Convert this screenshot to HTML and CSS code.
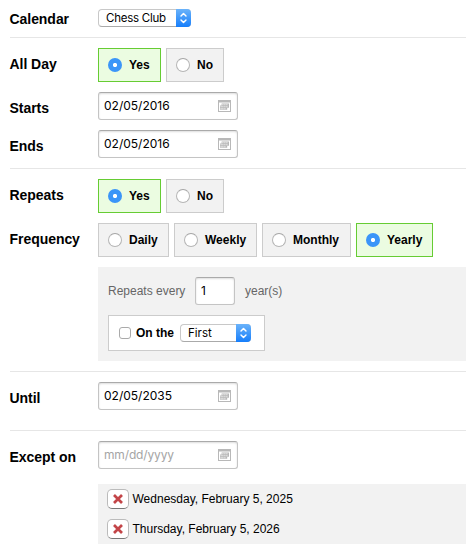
FILE: index.html
```html
<!DOCTYPE html>
<html lang="en">
<head>
<meta charset="utf-8">
<title>Calendar event</title>
<link rel="stylesheet" href="styles.css">
</head>
<body>
<svg class="defs" aria-hidden="true">
  <symbol id="cal" viewBox="0 0 13 12">
    <path fill="#b8b8b8" fill-rule="evenodd" d="M0 0H13V12H0ZM1 2.4V11H12V2.4Z"/>
    <path fill="#b8b8b8" d="M3.6 3.5H11V7.8H9.2V9.8H2V5.4H3.6Z"/>
    <path fill="#fff" d="M4.4 4.2h1v1h-1zM6.4 4.2h1v1h-1zM8.4 4.2h1v1h-1zM2.6 6.2h1v1h-1zM4.4 6.2h1v1h-1zM6.4 6.2h1v1h-1zM8.4 6.2h1v1h-1zM2.6 8.2h1v1h-1zM4.4 8.2h1v1h-1zM6.4 8.2h1v1h-1z"/>
  </symbol>
  <symbol id="arrows" viewBox="0 0 15 18">
    <path fill="none" stroke="#fff" stroke-width="1.4" stroke-linecap="round" stroke-linejoin="round" d="M5 7l2.5-2.6L10 7M5 11l2.5 2.6L10 11"/>
  </symbol>
  <symbol id="cross" viewBox="0 0 10 10">
    <path stroke="#c34548" stroke-width="2.7" d="M1 1l8 8M9 1L1 9"/>
  </symbol>
</svg>
<form class="form">
  <section class="group calendar">
    <div class="row">
      <span class="label">Calendar</span>
      <div class="select chess"><span>Chess Club</span><svg><use href="#arrows"/></svg></div>
    </div>
  </section>
  <section class="group dates">
    <div class="row choice">
      <span class="label">All Day</span>
      <div class="options">
        <div class="option yes on"><i class="radio"></i>Yes</div>
        <div class="option no"><i class="radio"></i>No</div>
      </div>
    </div>
    <div class="row field starts">
      <span class="label">Starts</span>
      <div class="input"><span>02/05/2016</span><svg><use href="#cal"/></svg></div>
    </div>
    <div class="row field">
      <span class="label">Ends</span>
      <div class="input"><span>02/05/2016</span><svg><use href="#cal"/></svg></div>
    </div>
  </section>
  <section class="group repeats">
    <div class="row choice">
      <span class="label">Repeats</span>
      <div class="options">
        <div class="option yes on"><i class="radio"></i>Yes</div>
        <div class="option no"><i class="radio"></i>No</div>
      </div>
    </div>
    <div class="row choice frequency">
      <span class="label">Frequency</span>
      <div class="options">
        <div class="option daily"><i class="radio"></i>Daily</div>
        <div class="option weekly"><i class="radio"></i>Weekly</div>
        <div class="option monthly"><i class="radio"></i>Monthly</div>
        <div class="option yearly on"><i class="radio"></i>Yearly</div>
      </div>
    </div>
    <div class="panel">
      <div class="every"><span class="before">Repeats every</span><div class="input count"><span>1</span></div><span>year(s)</span></div>
      <div class="nth"><i class="checkbox"></i><b>On the</b><div class="select first"><span>First</span><svg><use href="#arrows"/></svg></div></div>
    </div>
  </section>
  <section class="group until">
    <div class="row field">
      <span class="label">Until</span>
      <div class="input"><span>02/05/2035</span><svg><use href="#cal"/></svg></div>
    </div>
  </section>
  <section class="group except">
    <div class="row field">
      <span class="label">Except on</span>
      <div class="input placeholder"><span>mm/dd/yyyy</span><svg><use href="#cal"/></svg></div>
    </div>
    <div class="exceptions">
      <div class="exception"><span class="remove"><svg><use href="#cross"/></svg></span><span>Wednesday, February 5, 2025</span></div>
      <div class="exception"><span class="remove"><svg><use href="#cross"/></svg></span><span>Thursday, February 5, 2026</span></div>
    </div>
  </section>
</form>
</body>
</html>
```
FILE: styles.css
```css
* { box-sizing: border-box; }
body { margin: 0; background: #fff; color: #000; font: 12px/14px "Liberation Sans", Arial, sans-serif; white-space: nowrap; overflow: hidden; }
.defs { display: none; }
svg { display: block; flex: none; }
.form { padding-left: 10px; }
.group { border-bottom: 1px solid #e6e6e6; }
.calendar { height: 38px; padding-top: 9px; }
.dates { height: 131px; padding-top: 10px; }
.repeats { height: 203px; padding-top: 10px; }
.until { height: 59px; padding-top: 10px; }
.except { padding-top: 10px; border: 0; }
.row { display: grid; grid-template-columns: 88px 1fr; align-items: start; }
.label { font-weight: bold; font-size: 14px; line-height: 18px; padding-top: 1px; margin-left: -.5px; letter-spacing: -.05px; }
.choice .label { padding-top: 7px; }
.field .label { padding-top: 7px; }
.starts { margin: 10px 0; }
.options { display: flex; gap: 5px; }
.option { display: flex; align-items: center; height: 34px; padding: 0 0 0 9px; border: 1px solid #ccc; background: #f2f2f2; font-weight: bold; }
.option.on { border-color: #66cc33; background: #ebfce1; }
.yes { width: 63px; }
.no { width: 58px; }
.daily { width: 71px; }
.weekly { width: 83px; }
.monthly { width: 89px; }
.yearly { width: 77px; }
.radio { width: 14px; height: 14px; margin-right: 7px; border: 1px solid #b5b5b5; border-top-color: #a5a5a5; border-radius: 50%; background: #fff; flex: none; }
.on .radio { border: 0; background: radial-gradient(circle, #fff 0 1.8px, #3b95f8 2.4px); }
.input { display: flex; align-items: center; justify-content: space-between; width: 140px; height: 28px; padding: 0 6px 0 5px; border: 1px solid #c4c4c4; border-top-color: #aaa; border-radius: 3px; background: #fff; box-shadow: inset 0 1px 2px #ddd; font: 12px/14px Inter, sans-serif; }
.input svg { width: 13px; height: 12px; }
.placeholder { color: #a5a5a5; letter-spacing: -.15px; }
.select { display: flex; align-items: center; justify-content: space-between; height: 18px; padding-left: 7px; border: 1px solid #c8c8c8; border-bottom-color: #aaa; border-right: 0; border-radius: 4px; background: #fff; font: 11.5px/14px Inter, sans-serif; letter-spacing: -.25px; }
.select svg { width: 15px; height: 18px; margin: -1px 0; border-radius: 0 4px 4px 0; background: linear-gradient(#6bb3fa, #167efb); }
.chess { width: 93px; }
.first { width: 71px; letter-spacing: 0; }
.frequency { margin: 10px 0; }
.panel { height: 94px; margin-left: 88px; padding: 10px; background: #f2f2f2; }
.every { display: flex; align-items: center; color: #666; }
.before { width: 87px; }
.count { width: 40px; margin-right: 10px; color: #000; }
.nth { display: flex; align-items: center; width: 157px; height: 36px; margin-top: 10px; padding-left: 10px; border: 1px solid #ccc; background: #fff; }
.nth b { width: 44px; }
.checkbox { width: 12px; height: 12px; margin-right: 5px; border: 1px solid #aaa; border-radius: 3px; background: #fff; flex: none; }
.exceptions { height: 60px; margin: 15px 0 0 88px; background: #f2f2f2; }
.exception { display: flex; align-items: center; height: 30px; padding-left: 9px; }
.exception > span:last-child { margin-left: -.5px; }
.remove { display: flex; align-items: center; justify-content: center; width: 22px; height: 20px; margin-right: 4px; border: 1px solid #bbb; border-bottom-color: #777; border-radius: 5px; background: #fff; }
.remove svg { width: 10px; height: 10px; }
```
